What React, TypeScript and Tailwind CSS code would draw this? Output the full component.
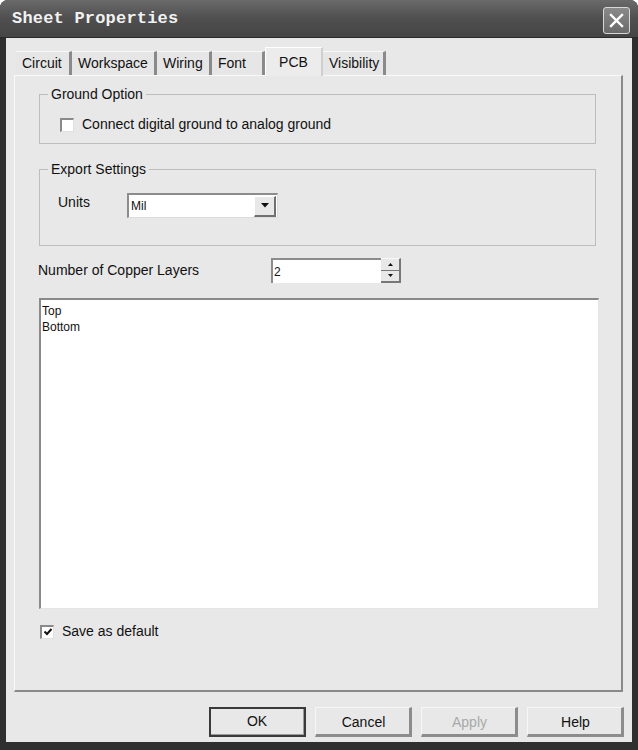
import React from "react";

const font = { fontFamily: '"Liberation Sans", Arial, sans-serif' };

function Tab({ label, active, w }: { label: string; active?: boolean; w: string }) {
  if (active) {
    return (
      <div
        className={`${w} h-[29px] -mb-[1px] bg-[#ececec] border-t border-l border-[#ffffff] border-r-[2px] border-r-[#cfcfcf] flex items-start pt-[4px] justify-center text-[14px] text-[#111] relative z-10`}
      >
        {label}
      </div>
    );
  }
  return (
    <div
      className={`${w} h-[24px] mt-[4px] bg-[#e6e6e6] border-t border-t-[#f8f8f8] border-r-[3px] border-r-[#8a8a8a] flex items-center pl-[6px] text-[14px] text-[#111] whitespace-nowrap`}
    >
      {label}
    </div>
  );
}

function Btn({ label, def, disabled }: { label: string; def?: boolean; disabled?: boolean }) {
  if (def) {
    return (
      <div className="w-[97px] h-[30px] border-[2px] border-[#3a3a3a] bg-[#e8e8e8] flex items-center justify-center text-[14px] text-[#111]">
        <div className="w-full h-full border-b border-r border-[#9a9a9a] flex items-center justify-center">{label}</div>
      </div>
    );
  }
  return (
    <div className="w-[97px] h-[30px] border-t border-l border-[#f6f6f6] border-r-[3px] border-b-[3px] border-r-[#8c8c8c] border-b-[#8c8c8c] bg-[#e8e8e8] flex items-center justify-center pl-[2px] pt-[2px]">
      <span className={disabled ? "text-[14px] text-[#a8a8a8]" : "text-[14px] text-[#111]"}>{label}</span>
    </div>
  );
}

function Check({ checked }: { checked?: boolean }) {
  return (
    <div className="w-[14px] h-[14px] border-t-[2px] border-l-[2px] border-[#8a8a8a] border-r border-b border-r-[#e0e0e0] border-b-[#e0e0e0] bg-white flex items-center justify-center shrink-0">
      {checked && (
        <svg width="10" height="10" viewBox="0 0 10 10">
          <path d="M1.5 4.5 L4 7 L8.5 2" stroke="#111" strokeWidth="2" fill="none" />
        </svg>
      )}
    </div>
  );
}

export default function App() {
  return (
    <div className="w-[638px] h-[750px] bg-[#2f2f2f] flex flex-col rounded-t-[8px] overflow-hidden" style={font}>
      {/* Title bar */}
      <div className="h-[38px] flex items-center justify-between pl-[12px] pr-[8px] bg-gradient-to-b from-[#6a6a6a] via-[#4f4f4f] to-[#454545] border-b border-[#2a2a2a]">
        <span
          className="text-[17px] font-bold text-[#f2f2f2] tracking-[0.2px]"
          style={{ fontFamily: '"Liberation Mono", "Courier New", monospace' }}
        >
          Sheet Properties
        </span>
        <div className="w-[27px] h-[27px] mt-[4px] rounded-[3px] border border-[#d8d8d8] bg-gradient-to-b from-[#8a8a8a] to-[#6a6a6a] flex items-center justify-center">
          <svg width="15" height="15" viewBox="0 0 15 15">
            <path d="M2 2 L13 13 M13 2 L2 13" stroke="#ffffff" strokeWidth="2.4" strokeLinecap="square" />
          </svg>
        </div>
      </div>

      {/* Client area */}
      <div className="flex-1 mx-[6px] mb-[8px] bg-[#e8e8e8] flex flex-col text-[14px] text-[#111]">
        {/* Tabs */}
        <div className="flex items-end pl-[10px] pt-[8px] h-[37px]">
          <Tab label="Circuit" w="w-[56px]" />
          <Tab label="Workspace" w="w-[85px]" />
          <Tab label="Wiring" w="w-[55px]" />
          <Tab label="Font" w="w-[53px]" />
          <Tab label="PCB" active w="w-[58px]" />
          <Tab label="Visibility" w="w-[63px]" />
        </div>

        {/* Panel */}
        <div className="ml-[8px] mr-[9px] h-[617px] bg-[#e8e8e8] border-t border-l border-t-[#fafafa] border-l-[#fafafa] border-r-[2px] border-b-[2px] border-r-[#8a8a8a] border-b-[#8a8a8a] flex flex-col pl-[24px] pr-[25px] pt-[10px]">
          <fieldset className="border border-[#bdbdbd] h-[58px] m-0 p-0">
            <legend className="ml-[8px] px-[3px] leading-[16px]">Ground Option</legend>
            <div className="flex items-center gap-[8px] pl-[20px] pt-[12px]">
              <Check />
              <span>Connect digital ground to analog ground</span>
            </div>
          </fieldset>

          <fieldset className="border border-[#bdbdbd] h-[85px] mt-[17px] m-0 p-0">
            <legend className="ml-[8px] px-[3px] leading-[16px]">Export Settings</legend>
            <div className="flex items-center pl-[18px] pt-[16px]">
              <span className="w-[69px] -mt-[7px]">Units</span>
              <div className="w-[151px] h-[25px] bg-white border-t-[2px] border-l-[2px] border-[#8c8c8c] border-r border-b border-r-[#dcdcdc] border-b-[#dcdcdc] flex items-center justify-between">
                <span className="pl-[2px] text-[12px]">Mil</span>
                <div className="w-[22px] h-[21px] mr-[1px] bg-[#e8e8e8] border-t border-l border-[#ffffff] border-r-[2px] border-b-[2px] border-r-[#707070] border-b-[#707070] flex items-center justify-center">
                  <svg width="8" height="5" viewBox="0 0 8 5">
                    <path d="M0 0 H8 L4 4.5 Z" fill="#111" />
                  </svg>
                </div>
              </div>
            </div>
          </fieldset>

          <div className="flex items-center mt-[12px] -ml-[1px] h-[25px]">
            <span className="w-[233px]">Number of Copper Layers</span>
            <div className="w-[110px] h-[25px] bg-white border-t-[2px] border-l-[2px] border-[#8c8c8c] flex items-center pl-[1px] text-[12px]">
              2
            </div>
            <div className="w-[20px] h-[25px] flex flex-col">
              <div className="flex-1 bg-[#e8e8e8] border-t border-[#f8f8f8] border-b border-b-[#777] border-r-[2px] border-r-[#777] flex items-center justify-center">
                <svg width="5" height="3" viewBox="0 0 5 3"><path d="M0 3 H5 L2.5 0 Z" fill="#111" /></svg>
              </div>
              <div className="flex-1 bg-[#e8e8e8] border-b-[2px] border-b-[#777] border-r-[2px] border-r-[#777] flex items-center justify-center">
                <svg width="5" height="3" viewBox="0 0 5 3"><path d="M0 0 H5 L2.5 3 Z" fill="#111" /></svg>
              </div>
            </div>
          </div>

          <div className="mt-[15px] w-[560px] h-[311px] bg-white border-t-[2px] border-l-[2px] border-[#8a8a8a] border-r border-b border-r-[#e4e4e4] border-b-[#e4e4e4] pl-[1px] pt-[3px] text-[12px] leading-[16px]">
            <div>Top</div>
            <div>Bottom</div>
          </div>

          <div className="flex items-center gap-[8px] mt-[12px] ml-[1px]">
            <Check checked />
            <span>Save as default</span>
          </div>
        </div>

        {/* Buttons */}
        <div className="flex justify-end gap-[9px] pr-[8px] pt-[15px]">
          <Btn label="OK" def />
          <Btn label="Cancel" />
          <Btn label="Apply" disabled />
          <Btn label="Help" />
        </div>
      </div>
    </div>
  );
}
